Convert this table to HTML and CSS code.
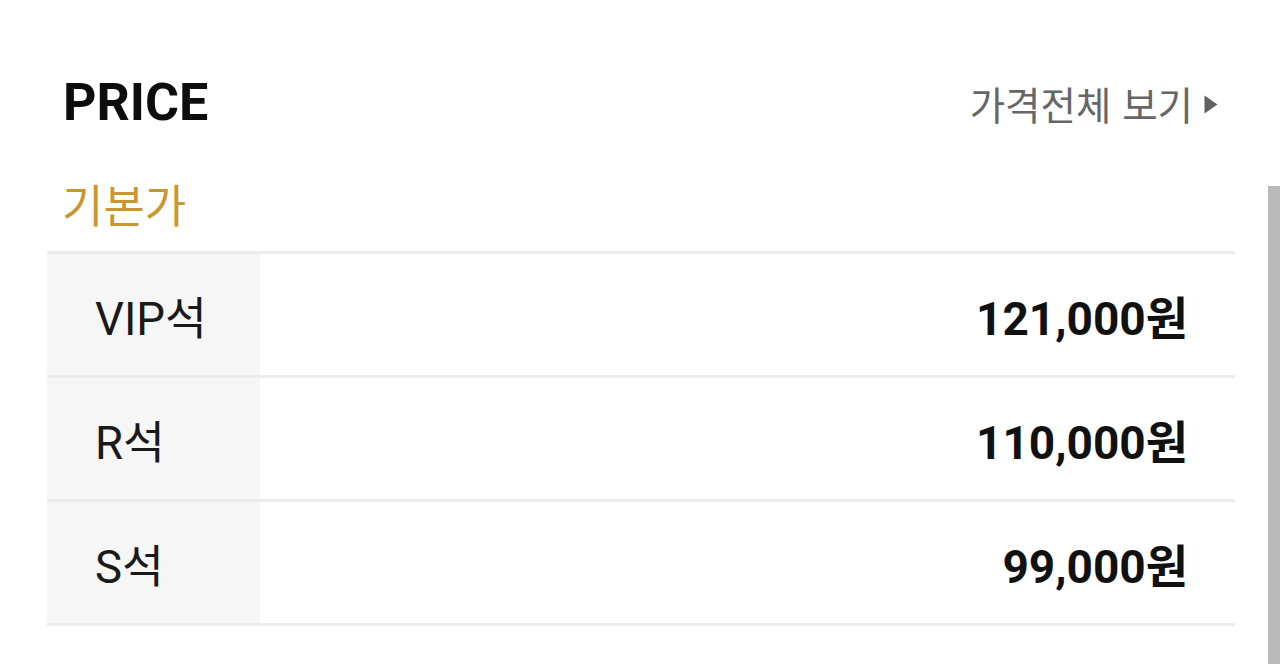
FILE: index.html
```html
<!DOCTYPE html>
<html lang="ko">
<head>
<meta charset="utf-8">
<title>PRICE</title>
<link rel="stylesheet" href="styles.css">
</head>
<body>
<div class="page">
  <div class="head">
    <h2 class="title">PRICE</h2>
    <a class="more" href="#">가격전체 보기<svg class="tri" width="14" height="19" viewBox="0 0 14 19"><path d="M0.5 0.5 L13.5 9.5 L0.5 18.5 Z" fill="#616161"/></svg></a>
  </div>
  <div class="sub">기본가</div>
  <div class="table">
    <div class="row"><div class="label">VIP석</div><div class="price">121,000원</div></div>
    <div class="row"><div class="label">R석</div><div class="price">110,000원</div></div>
    <div class="row"><div class="label">S석</div><div class="price">99,000원</div></div>
  </div>
</div>
<div class="scroll-thumb"></div>
</body>
</html>
```

FILE: styles.css
```css
html, body {
  margin: 0;
  padding: 0;
  background: #fff;
  height: 664px;
  overflow: hidden;
}
body {
  font-family: Roboto, "Noto Sans CJK KR", sans-serif;
  color: #111;
}
.page {
  padding: 70px 45px 0 47px;
}
.head {
  display: flex;
  justify-content: space-between;
  align-items: center;
  padding: 0 17px 0 16px;
  height: 66px;
}
.title {
  margin: 0;
  font-size: 52px;
  font-weight: 700;
  line-height: 66px;
  color: #0d0d0d;
}
.more {
  display: flex;
  align-items: center;
  gap: 11px;
  font-family: "Noto Sans CJK KR", sans-serif;
  font-size: 38.5px;
  color: #666;
  text-decoration: none;
  line-height: 66px;
}
.tri {
  display: block;
  margin-top: 2px;
}
.sub {
  padding: 40px 16px 0 15px;
  font-family: "Noto Sans CJK KR", sans-serif;
  font-size: 45px;
  line-height: 56px;
  color: #c9972f;
  height: 56px;
  margin-bottom: 19px;
}
.table {
  border-bottom: 3px solid #ececec;
}
.row {
  display: flex;
  border-top: 3px solid #ececec;
  height: 121px;
}
.label {
  width: 165px;
  flex: none;
  background: #f6f6f6;
  padding-left: 48px;
  display: flex;
  align-items: center;
  font-size: 45.5px;
  color: #1a1a1a;
}
.price {
  flex: 1;
  display: flex;
  align-items: center;
  justify-content: flex-end;
  padding-right: 47px;
  font-size: 46px;
  font-weight: 700;
  color: #111;
}
.scroll-thumb {
  position: absolute;
  right: 0;
  top: 186px;
  width: 12px;
  height: 478px;
  background: #bababa;
}
```
